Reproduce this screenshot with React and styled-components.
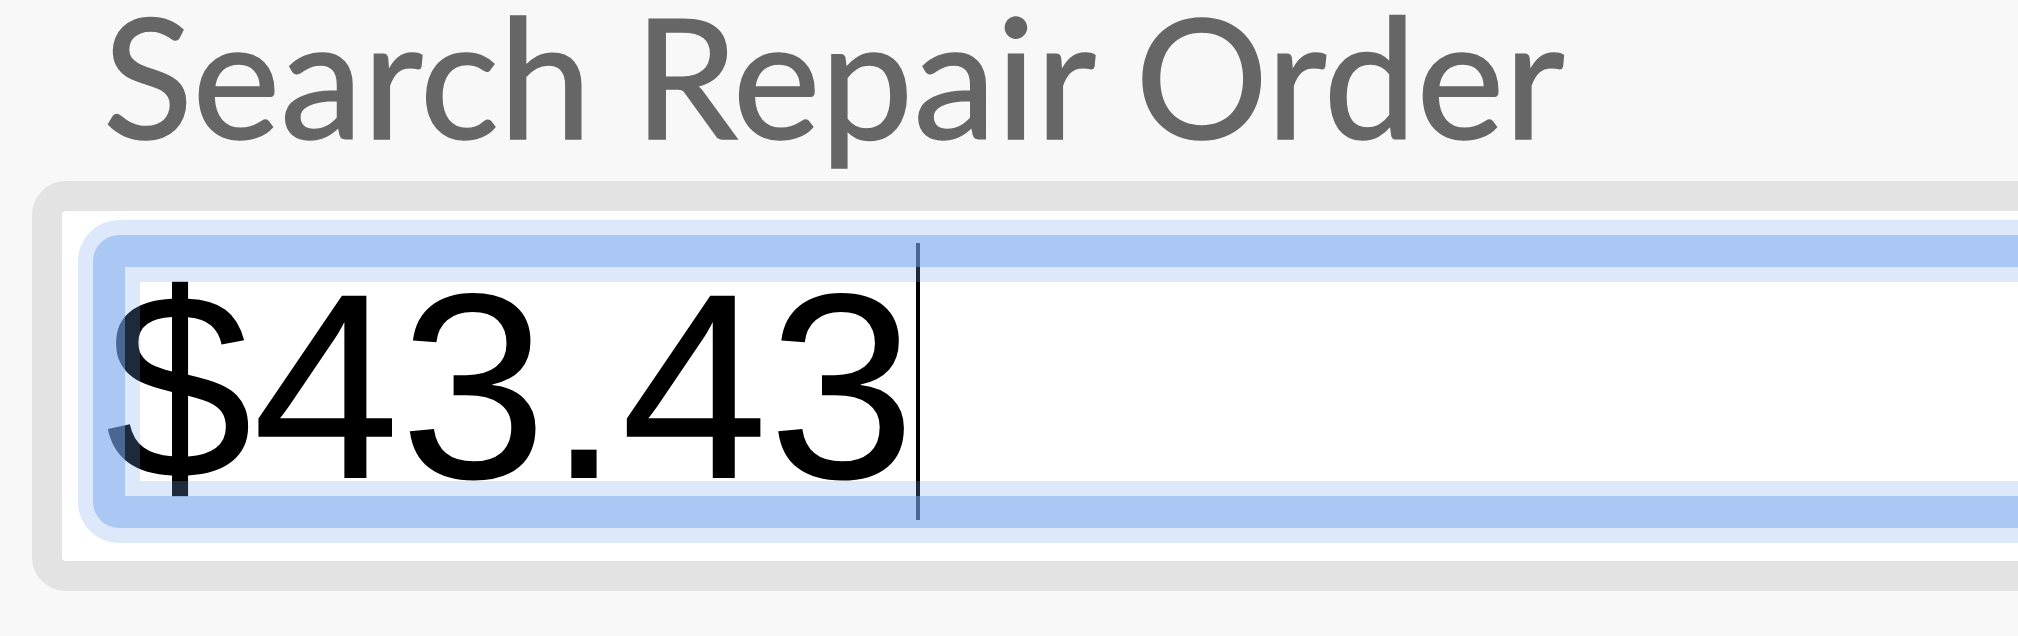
import React from "react";
import styled, { createGlobalStyle } from "styled-components";

const GlobalStyle = createGlobalStyle`
  html, body {
    margin: 0;
    padding: 0;
    background: #f8f8f8;
    overflow: hidden;
  }
  body {
    width: 2018px;
    height: 636px;
  }
`;

const Page = styled.main`
  display: flex;
  flex-direction: column;
  padding-left: 32px;
  box-sizing: border-box;
  width: 2018px;
  overflow: hidden;
`;

const Label = styled.label`
  display: block;
  font-family: Lato, "Noto Sans", sans-serif;
  font-size: 166px;
  line-height: 150px;
  height: 150px;
  color: #666666;
  -webkit-text-stroke: 1.5px #666666;
  padding-left: 71px;
  margin-bottom: 31px;
  white-space: nowrap;
`;

const Frame = styled.div`
  width: 2200px;
  flex-shrink: 0;
  box-sizing: border-box;
  border: 30px solid #e3e3e3;
  border-radius: 34px;
  background: #ffffff;
  padding: 71px 78px 80px 78px;
`;

const Field = styled.div`
  position: relative;
  display: flex;
  align-items: flex-start;
  box-sizing: border-box;
  height: 199px;
  padding-top: 5px;
  background: #ffffff;

  &::after {
    content: "";
    position: absolute;
    inset: -47px;
    border: 32px solid rgba(119, 166, 238, 0.62);
    border-radius: 26px;
    box-shadow: inset 0 0 0 15px rgba(119, 166, 238, 0.25),
      0 0 0 15px rgba(119, 166, 238, 0.25);
    pointer-events: none;
  }
`;

const Value = styled.span`
  font-family: "Liberation Sans", Arial, sans-serif;
  font-size: 265px;
  line-height: 199px;
  color: #000000;
  margin-left: -35px;
  white-space: nowrap;
`;

const Caret = styled.span`
  display: block;
  flex-shrink: 0;
  width: 4px;
  height: 277px;
  margin-top: -44px;
  margin-left: 0;
  background: #000000;
`;

export default function App() {
  return (
    <>
      <GlobalStyle />
      <Page>
        <Label>Search Repair Order</Label>
        <Frame>
          <Field>
            <Value>$43.43</Value>
            <Caret />
          </Field>
        </Frame>
      </Page>
    </>
  );
}
